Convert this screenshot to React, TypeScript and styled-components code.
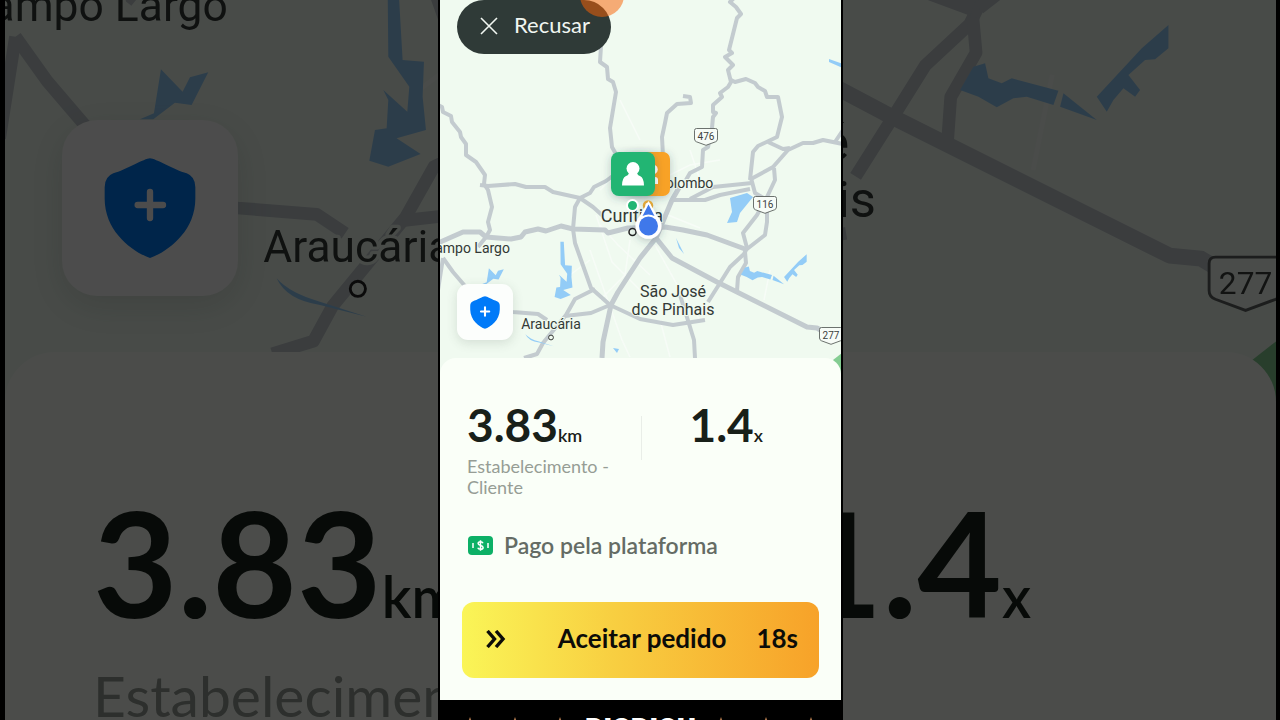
import React from "react";
import styled, { createGlobalStyle } from "styled-components";

const Global = createGlobalStyle`
  * { box-sizing: border-box; }
  body { margin: 0; background: #000; font-family: Lato, "Open Sans", sans-serif; color: #182019; }
  button { font: inherit; color: inherit; border: 0; margin: 0; cursor: pointer; }
  svg { display: block; }
`;

const Page = styled.div`
  height: 100vh;
  overflow: hidden;
  display: grid;
  grid-template-columns: minmax(0, 1fr) minmax(0, 401px) minmax(0, 1fr);
  gap: 2px;
  padding: 0 4px 0 5px;
`;

const Backdrop = styled.aside`
  overflow: hidden;
  display: flex;
  flex-direction: column;
  background: #f0faf0;
  filter: brightness(0.3);
`;

const Phone = styled.main`
  overflow: hidden;
  display: flex;
  flex-direction: column;
`;

const MapArea = styled.section`
  position: relative;
  flex: none;
  overflow: hidden;
`;

const MapSvg = styled.svg<{ $height: number }>`
  width: 100%;
  height: ${(p) => p.$height}px;
`;

const MapControls = styled.div`
  position: absolute;
  inset: 0 0 36px 17px;
  display: flex;
  flex-direction: column;
  align-items: flex-start;
  justify-content: space-between;
`;

const BackdropControls = styled.div`
  position: absolute;
  inset: 0;
  padding: 120px 0 0 57px;
`;

const DeclineButton = styled.button`
  display: flex;
  align-items: center;
  gap: 16px;
  height: 54px;
  padding: 0 21px 2px 23px;
  border-radius: 27px;
  background: #2f3a37;
  color: #f1f6f1;
  font-size: 22px;
  line-height: 26px;
  span {
    padding-bottom: 2px;
  }
`;

const TouchDot = styled.span`
  position: absolute;
  top: -27px;
  left: 35%;
  width: 44px;
  height: 44px;
  border-radius: 50%;
  background: rgba(250, 98, 4, 0.52);
`;

const SafetyButton = styled.button<{ $size: number }>`
  display: grid;
  place-items: center;
  padding: 0;
  width: ${(p) => p.$size}px;
  height: ${(p) => p.$size}px;
  border-radius: ${(p) => Math.round(p.$size / 5)}px;
  background: #fcfefc;
  box-shadow: 0 ${(p) => Math.round(p.$size / 18)}px ${(p) => Math.round(p.$size / 5)}px rgba(60, 80, 70, 0.16);
`;

const SafetyTile = styled(SafetyButton).attrs({ as: "div" })``;

const Panel = styled.section<{ $radius: string; $overlap: number }>`
  position: relative;
  flex: none;
  margin-top: -${(p) => p.$overlap}px;
  border-radius: ${(p) => p.$radius};
  background: #fafff8;
`;

const OrderPanel = styled(Panel)`
  padding: 41px 22px 22px;
`;

const BackdropPanel = styled(Panel)<{ $end?: boolean }>`
  flex: 1;
  display: flex;
  flex-direction: column;
  align-items: ${(p) => (p.$end ? "flex-end" : "flex-start")};
  padding: ${(p) => (p.$end ? "128px 245px 0 0" : "128px 0 0 88px")};
`;

const Metrics = styled.div`
  display: grid;
  grid-template-columns: 1fr 1fr;
  height: 98px;
`;

const Metric = styled.div<{ $inset: number }>`
  padding-left: ${(p) => p.$inset}px;
`;

const DividedMetric = styled(Metric)`
  background: linear-gradient(#e9eee8, #e9eee8) 0 17px / 1px 44px no-repeat;
`;

const Value = styled.p<{ $big?: boolean }>`
  margin: 0;
  white-space: nowrap;
  font-weight: 700;
  font-size: ${(p) => (p.$big ? 146 : 46)}px;
  line-height: ${(p) => (p.$big ? 164 : 52)}px;
  small {
    font-weight: 600;
    font-size: ${(p) => (p.$big ? 57 : 18)}px;
  }
`;

const Caption = styled.p<{ $big?: boolean }>`
  margin: ${(p) => (p.$big ? -17 : -5)}px 0 0;
  color: #969d95;
  white-space: ${(p) => (p.$big ? "nowrap" : "normal")};
  font-size: ${(p) => (p.$big ? 57 : 18)}px;
  line-height: ${(p) => (p.$big ? 68 : 21)}px;
`;

const Payment = styled.p`
  display: flex;
  align-items: center;
  gap: 11px;
  margin: 34px 0 0;
  padding-left: 6px;
  color: #646c65;
  font-weight: 600;
  font-size: 23px;
  line-height: 28px;
`;

const AcceptButton = styled.button`
  display: grid;
  grid-template-columns: 20px 1fr auto;
  align-items: center;
  width: 100%;
  height: 76px;
  margin-top: 43px;
  padding: 0 21px 4px 24px;
  border-radius: 12px;
  background: linear-gradient(90deg, #faf557, #f8cf41 42%, #f7a229);
  color: #0c0c08;
  font-weight: 700;
  font-size: 26px;
  svg {
    margin-top: 2px;
  }
`;

const AcceptLabel = styled.span`
  text-align: right;
  padding-right: 30px;
`;

const Footer = styled.footer`
  flex: 1;
  display: flex;
  justify-content: center;
  gap: 18px;
  padding-top: 14px;
  background: #000;
  color: #fff;
  font: 900 26px/28px Inter, sans-serif;
`;

const Stars = styled.span`
  display: flex;
  gap: 31px;
  padding-top: 3px;
`;

const ShieldIcon = ({ width }: { width: number }) => (
  <svg width={width} height={Math.round(width * 1.09)} viewBox="0 0 276 300" aria-hidden="true">
    <path fill="#007af8" d="M138 1C122 1 65 36 28 46Q2 56 2 88V122C2 222 88 282 138 300C188 282 274 222 274 122V88Q274 56 248 46C211 36 154 1 138 1Z" />
    <path d="M138 102v78M101 141h76" stroke="#fff" strokeWidth="19" strokeLinecap="round" />
  </svg>
);

const MoneyIcon = () => (
  <svg width="25" height="19" viewBox="0 0 25 19" aria-hidden="true">
    <rect width="25" height="19" rx="4" fill="#0cb066" />
    <path d="M5 7v5M20 7v5" stroke="#fff" strokeWidth="1.5" />
    <path d="M15 7.200C14.600 6.200 13.700 5.800 12.500 5.800c-1.400 0-2.400.7-2.400 1.800 0 2.500 5 1.200 5 3.800 0 1.100-1.100 1.900-2.600 1.900-1.300 0-2.300-.5-2.700-1.500M12.500 4.200v10.600" fill="none" stroke="#fff" strokeWidth="1.500" />
  </svg>
);

interface Place {
  x: number;
  y: number;
  size: number;
  name: string;
}

const CAMPO_LARGO: Place = { x: 468, y: 253, size: 14, name: "Campo Largo" };
const ARAUCARIA: Place = { x: 551, y: 329, size: 14, name: "Araucária" };
const SAO_JOSE: Place = { x: 673, y: 297, size: 16, name: "São José" };
const DOS_PINHAIS: Place = { x: 673, y: 315, size: 16, name: "dos Pinhais" };
const COLOMBO: Place = { x: 685, y: 188, size: 14, name: "Colombo" };
const CURITIBA: Place = { x: 632, y: 222, size: 18, name: "Curitiba" };

const ROUTE_476: Place = { x: 706, y: 137, size: 10, name: "476" };
const ROUTE_116: Place = { x: 765, y: 205, size: 10, name: "116" };
const ROUTE_277: Place = { x: 831, y: 336, size: 10, name: "277" };

const RoadShield = ({ place }: { place: Place }) => (
  <g transform={`translate(${place.x} ${place.y})`}>
    <path
      d="M-9.500-8.500h19q2 0 2 2v8.500q0 2-2 2.800L0 8.300l-9.500-3.500q-2-.8-2-2.800v-8.500q0-2 2-2z"
      fill="#f7fcf7"
      stroke="#5c625f"
      strokeWidth="0.900"
    />
    <text y="3" textAnchor="middle" fontSize={place.size} fill="#3b403d">
      {place.name}
    </text>
  </g>
);

const MINOR_STREETS = [
  "M596 215L612 262L640 290M590 250L604 290L622 340L630 357M655 245L680 290L700 320M630 240L625 275L600 300",
  "M600 225L618 245L650 275M620 170L600 190M668 215L700 228M640 190L690 165L720 160M660 320L670 357",
  "M770 270L764 300M690 150L700 180M620 100L640 140M590 260L570 275",
];

const ROADS = [
  "M601 46L600 62L607 67L608 79L613 82L616 92L610 128L612 147L617 156",
  "M438 105L442 107L443 112L451 116L452 122L460 132L461 137L466 144L466 155L476 162L485 175L484 184L488 190L492 207L488 222L490 230L486 237L478 247",
  "M480 185L488 186L515 184L526 187L545 187L553 192L580 198L593 207L603 216",
  "M618 172L606 181L594 187L590 193L580 198L575 207L573 229L575 243L591 288L610 305L640 319L673 325L705 320",
  "M595 289L575 299L566 315L543 343L537 354L524 358",
  "M565 316L591 313L610 305",
  "M443 258L453 272L465 286L490 308L513 312L538 314L547 320",
  "M443 258L438 290",
  "M708 302L720 283L730 267L744 254L747 248L743 233L757 215L767 197L775 180L774 168",
  "M747 249L765 235L767 222L767 204",
  "M745 252L746 263L738 277L737 291",
  "M672 200L705 200L720 195L750 189M690 199L713 187L752 183",
  "M750 180L753 152L758 146L777 137L782 117L778 97L767 97L765 91L758 87L755 83L746 79L735 82L731 80",
  "M751 178L755 193L765 199",
  "M751 179L773 167L788 150L803 143L813 143L823 140L843 144M835 142L843 130M768 142L783 149L790 148",
  "M734 -2L730 2L736 7L741 14L737 18L729 50L732 53L725 57L733 65L728 70L731 82L728 87L720 93L722 97L713 105L713 112L716 113L713 117L712 128L708 147L703 150L702 167L690 173L686 180",
  "M683 96L690 97L691 103L677 104L667 113L665 123L662 137L663 156",
  "M680 295L690 327L694 340L695 358",
];

const MAIN_ROADS = [
  "M438 243L463 232L480 232L486 237L511 239L521 237L525 232L538 229L546 231L561 226L573 229L605 230L608 233L628 228L665 227L683 230L707 235L745 249",
  "M680 186L672 200L656 238L640 258L618 292L611 305L603 342L602 358",
  "M656 238L672 258L717 282L737 292L807 327L817 328L822 331",
];

interface MapDrawingProps {
  places: Place[];
  routes: Place[];
}

const MapDrawing = ({ places, routes }: MapDrawingProps) => (
  <g fontFamily="Roboto, sans-serif">
    <rect x="400" y="-20" width="480" height="420" fill="#f0faf0" />
    <g fill="none" stroke="#f7fcf7" strokeWidth="1.500">
      {MINOR_STREETS.map((d) => (
        <path key={d} d={d} />
      ))}
    </g>
    <path d="M833 360L842 353V380H838Z" fill="#84cd92" />
    <g fill="none" stroke="#c3cbcf" strokeLinejoin="round">
      <g strokeWidth="4">
        {ROADS.map((d) => (
          <path key={d} d={d} />
        ))}
      </g>
      <g strokeWidth="5">
        {MAIN_ROADS.map((d) => (
          <path key={d} d={d} />
        ))}
      </g>
    </g>
    <g fill="#93ccf7">
      <g transform="translate(438.1 246.4) scale(.10515)">
        <path d="M1163-45H1195L1208 180L1272 185L1268 290L1278 390L1190 415L1262 462L1165 500L1108 482L1125 390L1160 385L1165 300L1150 270L1222 335L1228 260L1165 170Z" />
        <path d="M483 208L548 275L570 232L625 217L575 315L525 308L460 358L420 358L462 340Z" />
        <path d="M830 835Q870 880 960 905L1100 950L960 915Q860 900 830 835Z" />
      </g>
      <g transform="translate(703.1 246.4) scale(.10515)">
        <path d="M360 270L400 200L435 190L445 235L485 250L515 235L655 272L640 315L560 290L520 295L470 322L415 290Z" />
        <path d="M670 280L770 360L660 320Z" />
        <path d="M985 75V145L945 178L915 180L865 225L900 270L885 290L850 265L820 300L800 335L770 290L905 145Z" />
      </g>
      <path d="M613 348L619 349L617 353ZM730 198L747 193L753 197L740 213L737 222L727 223L732 212Z" />
      <path d="M676 238L684 254L679 248ZM829 59L843 64V68L829 62Z" />
    </g>
    <g fill="#333936" stroke="#f0faf0" strokeWidth="2" paintOrder="stroke" strokeLinejoin="round">
      {places.map((p) => (
        <text key={p.name} x={p.x} y={p.y} textAnchor="middle" fontSize={p.size}>
          {p.name}
        </text>
      ))}
    </g>
    <g fill="#f0faf0" stroke="#222">
      <circle cx="632.500" cy="232" r="3.500" strokeWidth="1.500" />
      <circle cx="551" cy="337.500" r="2.400" strokeWidth="0.900" />
    </g>
    {routes.map((r) => (
      <RoadShield key={r.name} place={r} />
    ))}
  </g>
);

const Markers = () => (
  <g>
    <defs>
      <filter id="lift" x="-40%" y="-40%" width="180%" height="180%">
        <feDropShadow dx="0" dy="2" stdDeviation="4" floodColor="#345" floodOpacity="0.300" />
      </filter>
    </defs>
    <g filter="url(#lift)">
      <rect x="626" y="152" width="44" height="44" rx="7" fill="#f8a225" />
      <path d="M655 165a5 5 0 0 1 0 9zM655 177q3 0 3 3v4h-3z" fill="#fff" />
    </g>
    <g filter="url(#lift)">
      <rect x="611" y="152" width="44" height="44" rx="8" fill="#22b573" />
      <circle cx="633" cy="168.500" r="6.500" fill="#fff" />
      <path d="M629 172h8q0 3 3 4 4 2 4 9.500h-22q0-7.500 4-9.500 3-1 3-4z" fill="#fff" />
    </g>
    <circle cx="632.500" cy="205.500" r="5.500" fill="#22b573" stroke="#fff" strokeWidth="2" />
    <circle cx="648" cy="205.500" r="4" fill="#fff" stroke="#e9aa38" strokeWidth="2.500" />
    <g filter="url(#lift)">
      <path d="M648.500 201L658 217A13 13 0 1 1 639 217Z" fill="#fff" />
    </g>
    <path d="M648.500 204.500L654.500 216Q648.500 213 642.500 216Z" fill="#3f78ea" />
    <circle cx="648.500" cy="226" r="9.500" fill="#3f78ea" />
  </g>
);

const StarRow = () => (
  <Stars aria-hidden="true">
    {[0, 1, 2].map((i) => (
      <svg key={i} width="14" height="14" viewBox="0 0 14 14">
        <path d="M7 0l2 5h5l-4 3 2 6-5-4-5 4 2-6-4-3h5z" fill="#a9744a" />
      </svg>
    ))}
  </Stars>
);

export default function App() {
  return (
    <>
      <Global />
      <Page>
        <Backdrop aria-hidden="true">
          <MapArea>
            <MapSvg $height={402} viewBox="439.700 246.400 136.600 126.800" preserveAspectRatio="xMinYMin slice">
              <MapDrawing places={[CAMPO_LARGO, ARAUCARIA]} routes={[]} />
            </MapSvg>
            <BackdropControls>
              <SafetyTile $size={176}>
                <ShieldIcon width={92} />
              </SafetyTile>
            </BackdropControls>
          </MapArea>
          <BackdropPanel $radius="50px 0 0 0" $overlap={50}>
            <Value $big>
              3.83<small>km</small>
            </Value>
            <Caption $big>Estabelecimento</Caption>
          </BackdropPanel>
        </Backdrop>

        <Phone>
          <MapArea>
            <MapSvg $height={376} viewBox="440 0 401 376" preserveAspectRatio="xMidYMin slice" role="img" aria-label="Mapa de Curitiba">
              <MapDrawing
                places={[COLOMBO, CURITIBA, CAMPO_LARGO, ARAUCARIA, SAO_JOSE, DOS_PINHAIS]}
                routes={[ROUTE_476, ROUTE_116, ROUTE_277]}
              />
              <Markers />
            </MapSvg>
            <MapControls>
              <DeclineButton type="button">
                <svg width="18" height="18" viewBox="0 0 18 18" aria-hidden="true">
                  <path d="M1 1l16 16M17 1L1 17" stroke="#f1f6f1" strokeWidth="1.600" />
                </svg>
                <span>Recusar</span>
              </DeclineButton>
              <SafetyButton type="button" $size={56} aria-label="Segurança">
                <ShieldIcon width={30} />
              </SafetyButton>
            </MapControls>
            <TouchDot />
          </MapArea>

          <OrderPanel $radius="16px 16px 0 0" $overlap={18}>
            <Metrics>
              <Metric $inset={5}>
                <Value>
                  3.83<small>km</small>
                </Value>
                <Caption>Estabelecimento - Cliente</Caption>
              </Metric>
              <DividedMetric $inset={49}>
                <Value>
                  1.4<small>x</small>
                </Value>
              </DividedMetric>
            </Metrics>
            <Payment>
              <MoneyIcon />
              Pago pela plataforma
            </Payment>
            <AcceptButton type="button">
              <svg width="20" height="18" viewBox="0 0 20 18" aria-hidden="true">
                <path d="M1.500 1L8.500 9l-7 8M10 1l7 8L10 17" fill="none" stroke="#0c0c08" strokeWidth="3.400" />
              </svg>
              <AcceptLabel>Aceitar pedido</AcceptLabel>
              <span>18s</span>
            </AcceptButton>
          </OrderPanel>
          <Footer>
            <StarRow />
            <span>DIGDIGU</span>
            <StarRow />
          </Footer>
        </Phone>

        <Backdrop aria-hidden="true">
          <MapArea>
            <MapSvg $height={402} viewBox="704 246.400 136.600 126.800" preserveAspectRatio="xMaxYMin slice">
              <MapDrawing places={[SAO_JOSE, DOS_PINHAIS]} routes={[ROUTE_277]} />
            </MapSvg>
          </MapArea>
          <BackdropPanel $radius="0 50px 0 0" $overlap={50} $end>
            <Value $big>
              1.4<small>x</small>
            </Value>
          </BackdropPanel>
        </Backdrop>
      </Page>
    </>
  );
}
